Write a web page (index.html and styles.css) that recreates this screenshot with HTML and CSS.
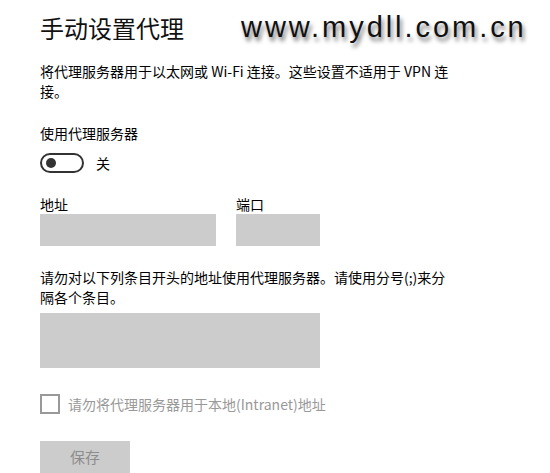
FILE: index.html
```html
<!DOCTYPE html>
<html lang="zh-CN">
<head>
<meta charset="utf-8">
<title>手动设置代理</title>
<link rel="stylesheet" href="styles.css">
</head>
<body>
<div class="page">
  <h1 class="title">手动设置代理</h1>
  <div class="watermark">www.mydll.com.cn</div>
  <p class="desc">将代理服务器用于以太网或 Wi-Fi 连接。这些设置不适用于 VPN 连接。</p>
  <div class="label use-label">使用代理服务器</div>
  <div class="toggle-row">
    <span class="toggle"><span class="knob"></span></span>
    <span class="toggle-text">关</span>
  </div>
  <div class="fields">
    <div class="field">
      <div class="label">地址</div>
      <div class="input addr"></div>
    </div>
    <div class="field">
      <div class="label">端口</div>
      <div class="input port"></div>
    </div>
  </div>
  <p class="desc exceptions">请勿对以下列条目开头的地址使用代理服务器。请使用分号(;)来分隔各个条目。</p>
  <div class="input area"></div>
  <div class="check-row">
    <span class="checkbox"></span>
    <span class="check-text">请勿将代理服务器用于本地(Intranet)地址</span>
  </div>
  <div class="button">保存</div>
</div>
</body>
</html>
```
FILE: styles.css
```css
html, body {
  margin: 0;
  padding: 0;
  background: #fff;
}
body {
  font-family: "Noto Sans CJK SC", "Noto Sans", sans-serif;
  color: #000;
  font-size: 14px;
}
.page {
  position: relative;
  padding: 12px 0 0 40px;
  height: 461px;
  overflow: hidden;
}
.title {
  margin: 0;
  font-size: 24px;
  font-weight: normal;
  line-height: 32px;
  color: #111;
}
.watermark {
  position: absolute;
  left: 241px;
  top: 10px;
  font-family: "Liberation Sans", Arial, sans-serif;
  font-size: 29px;
  letter-spacing: 2.95px;
  line-height: 34px;
  color: #111;
  text-shadow: 2px 4px 4px rgba(0, 0, 0, 0.55);
}
.desc {
  margin: 17px 0 0;
  width: 436px;
  line-height: 20px;
}
.label {
  line-height: 20px;
}
.use-label {
  margin-top: 22px;
}
.toggle-row {
  margin-top: 10px;
  display: flex;
  align-items: center;
  gap: 12px;
  height: 20px;
}
.toggle {
  box-sizing: border-box;
  width: 44px;
  height: 20px;
  border: 2px solid #333;
  border-radius: 10px;
  display: flex;
  align-items: center;
  padding-left: 4px;
}
.knob {
  width: 10px;
  height: 10px;
  border-radius: 50%;
  background: #333;
}
.toggle-text {
  line-height: 20px;
}
.fields {
  margin-top: 21px;
  display: flex;
  gap: 20px;
}
.input {
  background: #ccc;
  height: 32px;
}
.addr {
  width: 176px;
}
.port {
  width: 84px;
}
.exceptions {
  margin-top: 21px;
  width: 412px;
}
.area {
  margin-top: 6px;
  width: 280px;
  height: 55px;
}
.check-row {
  margin-top: 26px;
  display: flex;
  align-items: center;
  gap: 8px;
  height: 20px;
}
.checkbox {
  box-sizing: border-box;
  width: 20px;
  height: 20px;
  border: 2px solid #999;
}
.check-text {
  color: #999;
  line-height: 20px;
}
.button {
  margin-top: 27px;
  width: 90px;
  height: 32px;
  background: #ccc;
  color: #8c8c8c;
  font-size: 15px;
  line-height: 32px;
  text-align: center;
}
```
